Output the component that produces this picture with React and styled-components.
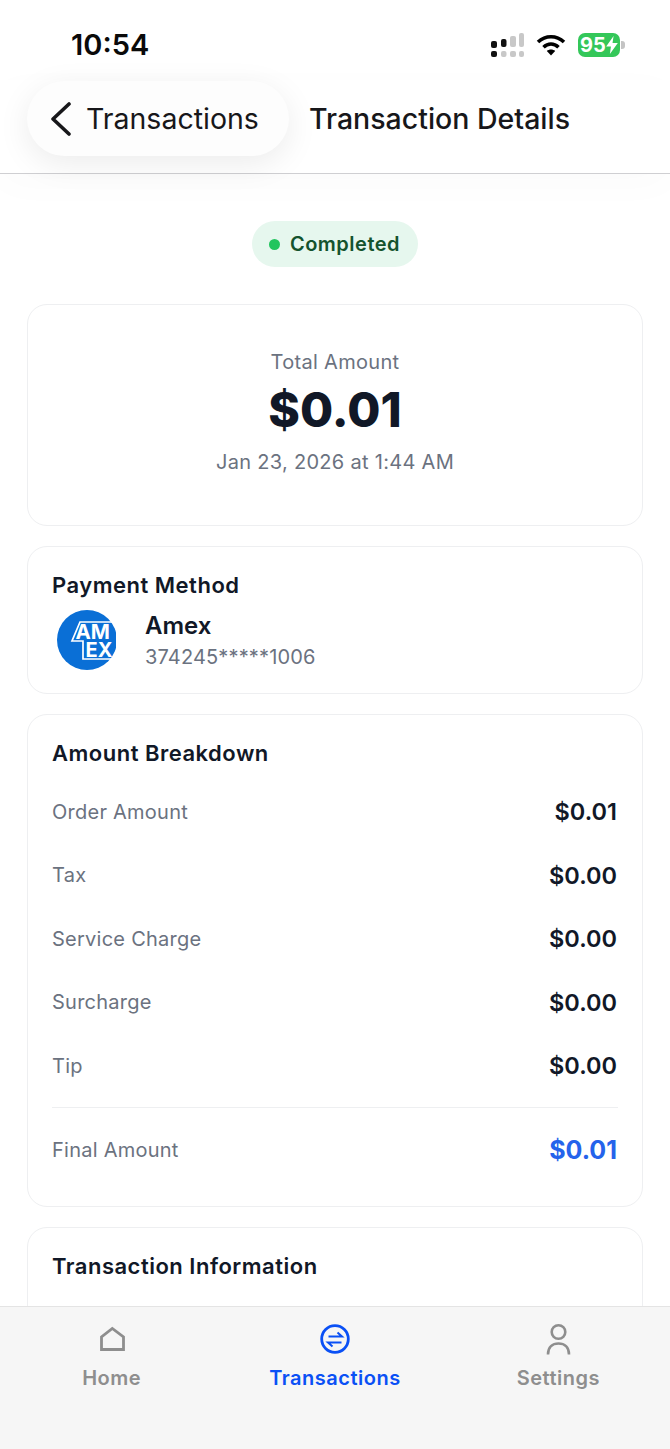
import React from "react";
import styled, { createGlobalStyle } from "styled-components";

const GlobalStyle = createGlobalStyle`
  html, body { margin: 0; padding: 0; background: #fff; }
  * { box-sizing: border-box; }
  body { font-family: Inter, "Liberation Sans", sans-serif; }
`;

const Page = styled.div`
  width: 670px;
  height: 1449px;
  display: flex;
  flex-direction: column;
  overflow: hidden;
  background: #fff;
`;

const StatusBar = styled.div`
  height: 80px;
  flex: none;
  display: flex;
  align-items: center;
  justify-content: space-between;
  padding: 9px 45px 0 71px;
`;

const Time = styled.span`
  font-size: 29px;
  font-weight: 600;
  color: #0a0a0a;
`;

const StatusIcons = styled.div`
  display: flex;
  align-items: center;
  gap: 12px;
`;

const Battery = styled.div`
  position: relative;
  width: 42px;
  height: 24px;
  border-radius: 7px;
  background: #34c759;
  color: #fff;
  font-size: 20px;
  font-weight: 700;
  line-height: 24px;
  padding-left: 2px;
  display: flex;
  align-items: center;
  margin-right: 5px;
`;

const BatteryCap = styled.span`
  position: absolute;
  right: -5px;
  top: 8px;
  width: 4px;
  height: 8px;
  border-radius: 0 3px 3px 0;
  background: #c4c4c4;
`;

const Header = styled.header`
  height: 94px;
  flex: none;
  display: flex;
  align-items: flex-start;
  gap: 20px;
  padding: 0 27px;
  border-bottom: 1px solid #cfcfd2;
  box-shadow: 0 10px 40px rgba(0, 0, 0, 0.02);
`;

const BackPill = styled.div`
  width: 262px;
  height: 75px;
  margin-top: 1px;
  border-radius: 38px;
  background: #fdfdfd;
  display: flex;
  align-items: center;
  gap: 14px;
  padding-left: 23px;
  box-shadow: 0 8px 32px rgba(0, 0, 0, 0.08);
`;

const HeaderText = styled.span`
  font-size: 28.5px;
  font-weight: ${(p) => p.$weight || 400};
  color: #17171a;
`;

const HeaderTitle = styled(HeaderText)`
  line-height: 76px;
  margin-top: 1px;
`;

const Content = styled.main`
  flex: 1;
  min-height: 0;
  overflow: hidden;
  display: flex;
  flex-direction: column;
  gap: 20px;
  padding: 47px 27px 0;
`;

const BadgeRow = styled.div`
  display: flex;
  justify-content: center;
  margin-bottom: 17px;
`;

const Badge = styled.div`
  height: 46px;
  border-radius: 23px;
  background: #e6f7ee;
  color: #14532d;
  font-size: 20px;
  font-weight: 600;
  letter-spacing: 0.5px;
  display: flex;
  align-items: center;
  gap: 10px;
  padding: 0 18px 0 17px;
`;

const Dot = styled.span`
  width: 11px;
  height: 11px;
  border-radius: 50%;
  background: #22c55e;
`;

const Card = styled.section`
  flex: none;
  height: ${(p) => p.$height}px;
  border: 1px solid #eeeff1;
  border-radius: 20px;
  background: #fff;
  padding: 24px 24px 0;
`;

const SummaryCard = styled(Card)`
  padding-top: 45px;
  display: flex;
  flex-direction: column;
  align-items: center;
`;

const Muted = styled.span`
  font-size: 20px;
  letter-spacing: ${(p) => p.$spacing || 0.25}px;
  color: #6b7280;
`;

const BigAmount = styled.div`
  font-size: 48px;
  font-weight: 800;
  line-height: 60px;
  color: #111827;
  margin: 6px 0 10px;
`;

const CardTitle = styled.h2`
  margin: 0;
  font-size: 22px;
  line-height: 28px;
  font-weight: 600;
  letter-spacing: 0.5px;
  color: #111827;
`;

const MethodRow = styled.div`
  display: flex;
  align-items: center;
  gap: 28px;
  padding-left: 5px;
  margin-top: 11px;
`;

const MethodInfo = styled.div`
  display: flex;
  flex-direction: column;
  gap: 4px;
`;

const MethodName = styled.span`
  font-size: 24px;
  line-height: 30px;
  font-weight: 600;
  color: #111827;
`;

const Rows = styled.div`
  margin-top: 13px;
`;

const Row = styled.div`
  height: 63.5px;
  display: flex;
  align-items: center;
  justify-content: space-between;
`;

const FinalRow = styled(Row)`
  border-top: 1px solid #eeeff1;
  margin-top: 9px;
  height: 85px;
`;

const Value = styled.span`
  font-size: ${(p) => p.$size || 23.5}px;
  font-weight: ${(p) => p.$weight || 600};
  color: ${(p) => p.$color || "#111827"};
  margin-right: 1px;
`;

const TabBar = styled.nav`
  height: 143px;
  flex: none;
  background: #f6f6f6;
  border-top: 1px solid #e4e4e4;
  display: grid;
  grid-template-columns: 1fr 1fr 1fr;
  padding: 15px 0 0 0;
`;

const Tab = styled.div`
  display: flex;
  flex-direction: column;
  align-items: center;
  gap: 10px;
  color: ${(p) => (p.$active ? "#0a50f5" : "#8e8e8e")};
  font-size: 20px;
  font-weight: 600;
  letter-spacing: 0.5px;
`;

const TabIcon = styled.svg`
  width: 34px;
  height: 34px;
  display: block;
`;

const HomeIcon = () => (
  <TabIcon viewBox="0 0 34 34" fill="none" stroke="currentColor" strokeWidth="2.8">
    <path d="M6.5 27.5V15L17.3 6.5L28.5 15V27.5Z" />
  </TabIcon>
);

const TransferIcon = () => (
  <TabIcon viewBox="0 0 34 34" fill="none" stroke="currentColor">
    <circle cx="17" cy="17" r="13.3" strokeWidth="2.8" />
    <path d="M10.5 14.5H24L19.5 10.5" strokeWidth="2" />
    <path d="M23.5 20.5H10L14.5 24.5" strokeWidth="2" />
  </TabIcon>
);

const PersonIcon = () => (
  <TabIcon viewBox="0 0 34 34" fill="none" stroke="currentColor" strokeWidth="2.6">
    <circle cx="17.5" cy="10" r="6.8" />
    <path d="M7 32.5C7 25 11.5 21.5 17.5 21.5S28 25 28 32.5" />
  </TabIcon>
);

const Signal = () => (
  <svg width="33" height="24" viewBox="0 0 33 24">
    <rect x="0" y="8" width="6" height="7" rx="2" fill="#111" />
    <rect x="0" y="18" width="6" height="6" rx="2" fill="#111" />
    <rect x="10" y="6" width="5.5" height="8" rx="2" fill="#111" />
    <rect x="10" y="18" width="5.5" height="6" rx="2" fill="#c8c8c8" />
    <rect x="19" y="3" width="6" height="11" rx="2" fill="#c8c8c8" />
    <rect x="19" y="18" width="6" height="6" rx="2" fill="#c8c8c8" />
    <rect x="28" y="0" width="5" height="14" rx="2" fill="#c8c8c8" />
    <rect x="28" y="18" width="5" height="6" rx="2" fill="#c8c8c8" />
  </svg>
);

const Wifi = () => (
  <svg width="30" height="22" viewBox="0 0 30 22" fill="none" stroke="#000" strokeWidth="3.6">
    <path d="M2 8C9.5 1 20.5 1 28 8" />
    <path d="M7.5 13.2C12 9 18 9 22.5 13.2" />
    <path d="M15 21.5L10.8 17C13 15 17 15 19.2 17Z" fill="#000" stroke="none" />
  </svg>
);

const AmexLogo = () => (
  <svg width="60" height="60" viewBox="0 0 60 60">
    <defs>
      <clipPath id="amex-clip">
        <rect x="0" y="0" width="59" height="60" />
      </clipPath>
    </defs>
    <g clipPath="url(#amex-clip)">
      <circle cx="30" cy="30" r="30" fill="#0a6fd6" />
      <path d="M60 12H23L15 31H26V49H60" fill="none" stroke="#fff" strokeWidth="1.7" />
      <text x="18.5" y="28.5" fontFamily="Inter, sans-serif" fontSize="20.5" fontWeight="700" fill="#fff">AM</text>
      <text x="28.5" y="47" fontFamily="Inter, sans-serif" fontSize="20" fontWeight="700" fill="#fff">EX</text>
    </g>
  </svg>
);

const breakdown = [
  ["Order Amount", "$0.01"],
  ["Tax", "$0.00"],
  ["Service Charge", "$0.00"],
  ["Surcharge", "$0.00"],
  ["Tip", "$0.00"],
];

export default function App() {
  return (
    <Page>
      <GlobalStyle />
      <StatusBar>
        <Time>10:54</Time>
        <StatusIcons>
          <Signal />
          <Wifi />
          <Battery>
            95
            <svg width="12" height="18" viewBox="0 0 11 17">
              <path d="M7 0L0 10H4.5L3.5 17L11 6.5H6Z" fill="#fff" />
            </svg>
            <BatteryCap />
          </Battery>
        </StatusIcons>
      </StatusBar>
      <Header>
        <BackPill>
          <svg width="22" height="34" viewBox="0 0 22 34" fill="none" stroke="#17171a" strokeWidth="3.6" strokeLinecap="round" strokeLinejoin="round">
            <path d="M19 2L3 17L19 32" />
          </svg>
          <HeaderText>Transactions</HeaderText>
        </BackPill>
        <HeaderTitle $weight={500}>Transaction Details</HeaderTitle>
      </Header>
      <Content>
        <BadgeRow>
          <Badge>
            <Dot />
            Completed
          </Badge>
        </BadgeRow>
        <SummaryCard $height={222}>
          <Muted $spacing={0.3}>Total Amount</Muted>
          <BigAmount>$0.01</BigAmount>
          <Muted $spacing={0.3}>Jan 23, 2026 at 1:44 AM</Muted>
        </SummaryCard>
        <Card $height={148}>
          <CardTitle>Payment Method</CardTitle>
          <MethodRow>
            <AmexLogo />
            <MethodInfo>
              <MethodName>Amex</MethodName>
              <Muted $spacing={0.15}>374245*****1006</Muted>
            </MethodInfo>
          </MethodRow>
        </Card>
        <Card $height={493}>
          <CardTitle>Amount Breakdown</CardTitle>
          <Rows>
            {breakdown.map(([label, value]) => (
              <Row key={label}>
                <Muted>{label}</Muted>
                <Value>{value}</Value>
              </Row>
            ))}
            <FinalRow>
              <Muted>Final Amount</Muted>
              <Value $color="#2563eb" $weight={700} $size={25}>$0.01</Value>
            </FinalRow>
          </Rows>
        </Card>
        <Card $height={200}>
          <CardTitle>Transaction Information</CardTitle>
        </Card>
      </Content>
      <TabBar>
        <Tab>
          <HomeIcon />
          Home
        </Tab>
        <Tab $active>
          <TransferIcon />
          Transactions
        </Tab>
        <Tab>
          <PersonIcon />
          Settings
        </Tab>
      </TabBar>
    </Page>
  );
}
